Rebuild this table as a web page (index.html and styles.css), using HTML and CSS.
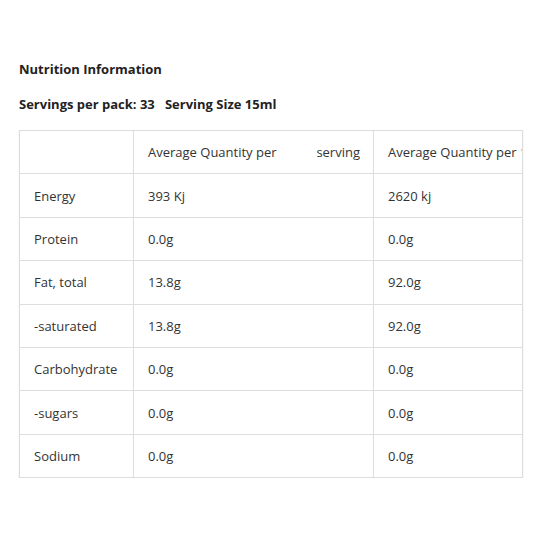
FILE: index.html
```html
<!DOCTYPE html>
<html lang="en">
<head>
  <meta charset="UTF-8">
  <meta name="viewport" content="width=device-width, initial-scale=1.0">
  <title>Nutrition Information</title>
  <link rel="stylesheet" href="styles.css">
</head>
<body>
  <div class="nutrition">
    <p class="title">Nutrition Information</p>
    <p class="servings">Servings per pack: 33&nbsp;&nbsp;&nbsp;Serving Size 15ml</p>
    <div class="table-wrap">
      <table class="facts">
        <colgroup>
          <col class="col-name">
          <col class="col-serving">
          <col class="col-100">
        </colgroup>
        <tr>
          <td></td>
          <td><div class="per-serving"><span>Average Quantity per</span><span>serving</span></div></td>
          <td>Average Quantity per 100ml</td>
        </tr>
        <tr><td>Energy</td><td>393 Kj</td><td>2620 kj</td></tr>
        <tr><td>Protein</td><td>0.0g</td><td>0.0g</td></tr>
        <tr><td>Fat, total</td><td>13.8g</td><td>92.0g</td></tr>
        <tr><td>-saturated</td><td>13.8g</td><td>92.0g</td></tr>
        <tr><td>Carbohydrate</td><td>0.0g</td><td>0.0g</td></tr>
        <tr><td>-sugars</td><td>0.0g</td><td>0.0g</td></tr>
        <tr><td>Sodium</td><td>0.0g</td><td>0.0g</td></tr>
      </table>
    </div>
  </div>
</body>
</html>
```

FILE: styles.css
```css
body {
  margin: 0;
  background-color: #fff;
  font-family: "Open Sans", Arial, sans-serif;
  color: #333;
}

.nutrition {
  padding: 60px 28px 0 19px;
}

.title {
  margin: 0 0 17px;
  font-size: 13px;
  font-weight: 700;
  line-height: 18px;
  color: #222;
}

.servings {
  margin: 0 0 17px;
  font-size: 13px;
  font-weight: 700;
  line-height: 18px;
  color: #222;
}

.table-wrap {
  width: 503px;
  overflow: hidden;
  border-right: 1px solid #ddd;
  box-shadow: 0 1px 2px rgba(0, 0, 0, 0.08);
}

.facts {
  border-collapse: collapse;
  table-layout: fixed;
  width: 600px;
  font-size: 13px;
}

.col-name {
  width: 114px;
}

.col-serving {
  width: 240px;
}

.col-100 {
  width: 246px;
}

.facts tr {
  height: 43.4px;
}

.facts td {
  padding: 0 13px 0 14px;
  border: 1px solid #ddd;
  white-space: nowrap;
  overflow: hidden;
  vertical-align: middle;
}

.per-serving {
  display: flex;
  justify-content: space-between;
}
```
